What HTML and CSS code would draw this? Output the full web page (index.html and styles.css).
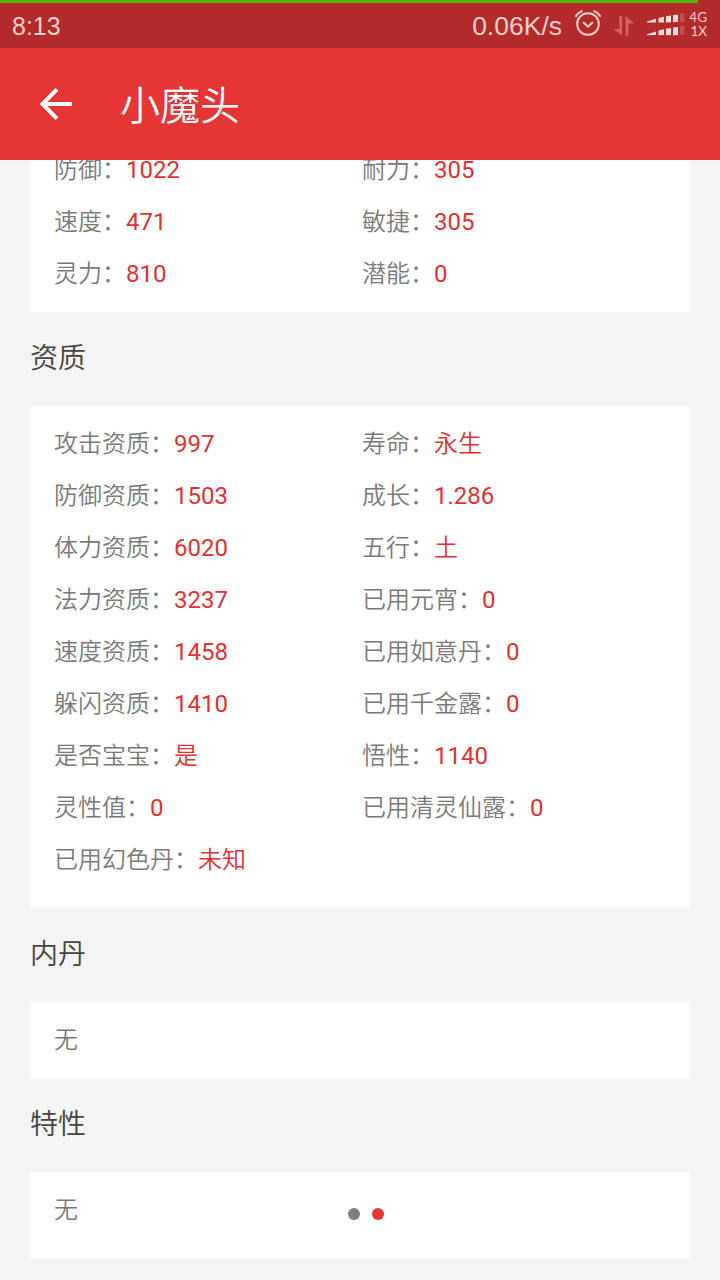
FILE: index.html
```html
<!DOCTYPE html>
<html lang="zh-CN">
<head>
    <meta charset="UTF-8">
    <meta name="viewport" content="width=device-width, initial-scale=1.0">
    <title>小魔头</title>
    <link rel="stylesheet" href="styles.css">
</head>
<body>

<div class="battery"></div>

<div class="status-bar">
    <span class="time">8:13</span>
    <span class="speed">0.06K/s</span>
    <svg class="alarm" width="26" height="28" viewBox="0 0 26 28" fill="none" stroke="#f9c9c6" stroke-width="2.1" stroke-linecap="round" stroke-linejoin="round">
        <circle cx="13" cy="15" r="10.8"/>
        <path d="M8.6 13.6L13 17.6L17.4 13.6"/>
        <path d="M1 7Q3 3.4 6.8 2.2M25 7Q23 3.4 19.2 2.2"/>
    </svg>
    <svg class="data" width="22" height="22" viewBox="0 0 22 22" fill="#cd6662">
        <path d="M6.3 1H9V20.5L0.5 14H6.3Z"/>
        <path d="M12.6 1L21.3 8.5H15.4V20.5H12.6Z"/>
    </svg>
    <svg class="signal" width="38" height="24" viewBox="0 0 38 24" fill="#fbdcda">
        <path d="M0 8.5L9 5.7V9.4L0 9.6Z"/>
        <path d="M11.5 5L17 3.8V9.4L11.5 9.6Z"/>
        <path d="M19 3.2L24 2.6V9.2L19 9.4Z"/>
        <path d="M26 2L31 1.4V8.8L26 9.2Z"/>
        <path d="M33 .5H37.5V9H33Z" opacity=".22"/>
        <path d="M0 21.3L9 18.5V22L0 22.3Z"/>
        <path d="M11.5 17.5L17 16.3V22L11.5 22.3Z"/>
        <path d="M19 15.7L24 15.1V22L19 22.2Z"/>
        <path d="M26 14.5L31 14V22L26 22.2Z"/>
        <path d="M33 13H37.5V22H33Z" opacity=".22"/>
    </svg>
    <div class="network">
        <span>4G</span>
        <span>1X</span>
    </div>
</div>

<header class="toolbar">
    <svg class="back" width="34" height="34" viewBox="0 0 34 34" fill="none" stroke="#fff" stroke-width="4">
        <path d="M33 17H4M18 2.4L3.4 17L18 31.6"/>
    </svg>
    <h1>小魔头</h1>
</header>

<main class="content">
    <div class="card card-base">
        <div class="item">防御：<b>1022</b></div>
        <div class="item">耐力：<b>305</b></div>
        <div class="item">速度：<b>471</b></div>
        <div class="item">敏捷：<b>305</b></div>
        <div class="item">灵力：<b>810</b></div>
        <div class="item">潜能：<b>0</b></div>
    </div>

    <h2>资质</h2>
    <div class="card card-growth">
        <div class="item">攻击资质：<b>997</b></div>
        <div class="item">寿命：<b class="word">永生</b></div>
        <div class="item">防御资质：<b>1503</b></div>
        <div class="item">成长：<b>1.286</b></div>
        <div class="item">体力资质：<b>6020</b></div>
        <div class="item">五行：<b class="word">土</b></div>
        <div class="item">法力资质：<b>3237</b></div>
        <div class="item">已用元宵：<b>0</b></div>
        <div class="item">速度资质：<b>1458</b></div>
        <div class="item">已用如意丹：<b>0</b></div>
        <div class="item">躲闪资质：<b>1410</b></div>
        <div class="item">已用千金露：<b>0</b></div>
        <div class="item">是否宝宝：<b class="word">是</b></div>
        <div class="item">悟性：<b>1140</b></div>
        <div class="item">灵性值：<b>0</b></div>
        <div class="item">已用清灵仙露：<b>0</b></div>
        <div class="item">已用幻色丹：<b class="word">未知</b></div>
    </div>

    <h2>内丹</h2>
    <div class="card card-core">
        <div class="item">无</div>
    </div>

    <h2>特性</h2>
    <div class="card card-trait">
        <div class="item">无</div>
    </div>
</main>

<!-- page indicator -->
<div class="dots">
    <span class="dot"></span>
    <span class="dot active"></span>
</div>

</body>
</html>
```
FILE: styles.css
```css
* {
    box-sizing: border-box;
}

body {
    margin: 0;
    height: 1280px;
    display: flex;
    flex-direction: column;
    overflow: hidden;
    background: #f4f4f4;
    color: #7a7a7a;
    font-family: Roboto, "Noto Sans CJK SC", sans-serif;
    font-size: 24px;
}

.battery {
    flex: none;
    height: 3px;
    background: linear-gradient(to right, #50b80a 698px, #b22a29 698px);
}

.status-bar {
    flex: none;
    display: flex;
    align-items: center;
    height: 45px;
    padding: 0 13px 0 12px;
    background: #b22a29;
    color: #f9cfcc;
    font-family: "Liberation Sans", Arial, sans-serif;
    font-size: 26px;
}

.time {
    margin-right: auto;
    padding-top: 2px;
    font-size: 25px;
}

.speed {
    padding-top: 1px;
    font-size: 26.5px;
}

.alarm {
    margin: -5px 0 0 13px;
}

.data {
    margin-left: 12px;
}

.signal {
    margin: -2px 0 0 12px;
}

.network {
    display: flex;
    flex-direction: column;
    align-items: flex-end;
    width: 22px;
    margin-top: -3px;
    font-family: Lato, sans-serif;
    font-size: 13.5px;
    line-height: 14px;
}

.toolbar {
    flex: none;
    display: flex;
    align-items: center;
    height: 112px;
    padding-left: 39px;
    background: #e53535;
    color: #fff;
}

.toolbar h1 {
    margin: 0 0 0 47px;
    padding-top: 6px;
    font-size: 40px;
    font-weight: 350;
    line-height: 56px;
}

.content {
    flex: 1;
    min-height: 0;
    overflow: hidden;
    padding: 0 30px;
}

h2 {
    margin: 0;
    height: 94px;
    color: #444;
    font-size: 28px;
    font-weight: 350;
    line-height: 94px;
}

.card {
    display: flex;
    flex-wrap: wrap;
    align-content: flex-start;
    padding: 12px 20px 0 24px;
    background: #fff;
    box-shadow: 0 1px 1px #f9f9f9;
}

.item {
    width: 50%;
    height: 52px;
    font-weight: 350;
    line-height: 52px;
    white-space: nowrap;
}

.item b {
    color: #e03232;
    font-weight: 400;
}

.item .word {
    font-weight: 350;
}

/* scrolled half under the toolbar */
.card-base {
    height: 169px;
    margin-top: -17px;
    padding-top: 1px;
}

.card-growth {
    height: 502px;
}

.card-core {
    height: 76px;
}

.card-trait {
    height: 86px;
}

.dots {
    position: absolute;
    left: 348px;
    top: 1208px;
    display: flex;
    gap: 12px;
}

.dot {
    width: 12px;
    height: 12px;
    border-radius: 50%;
    background: #808080;
}

.dot.active {
    background: #e53535;
}
```
